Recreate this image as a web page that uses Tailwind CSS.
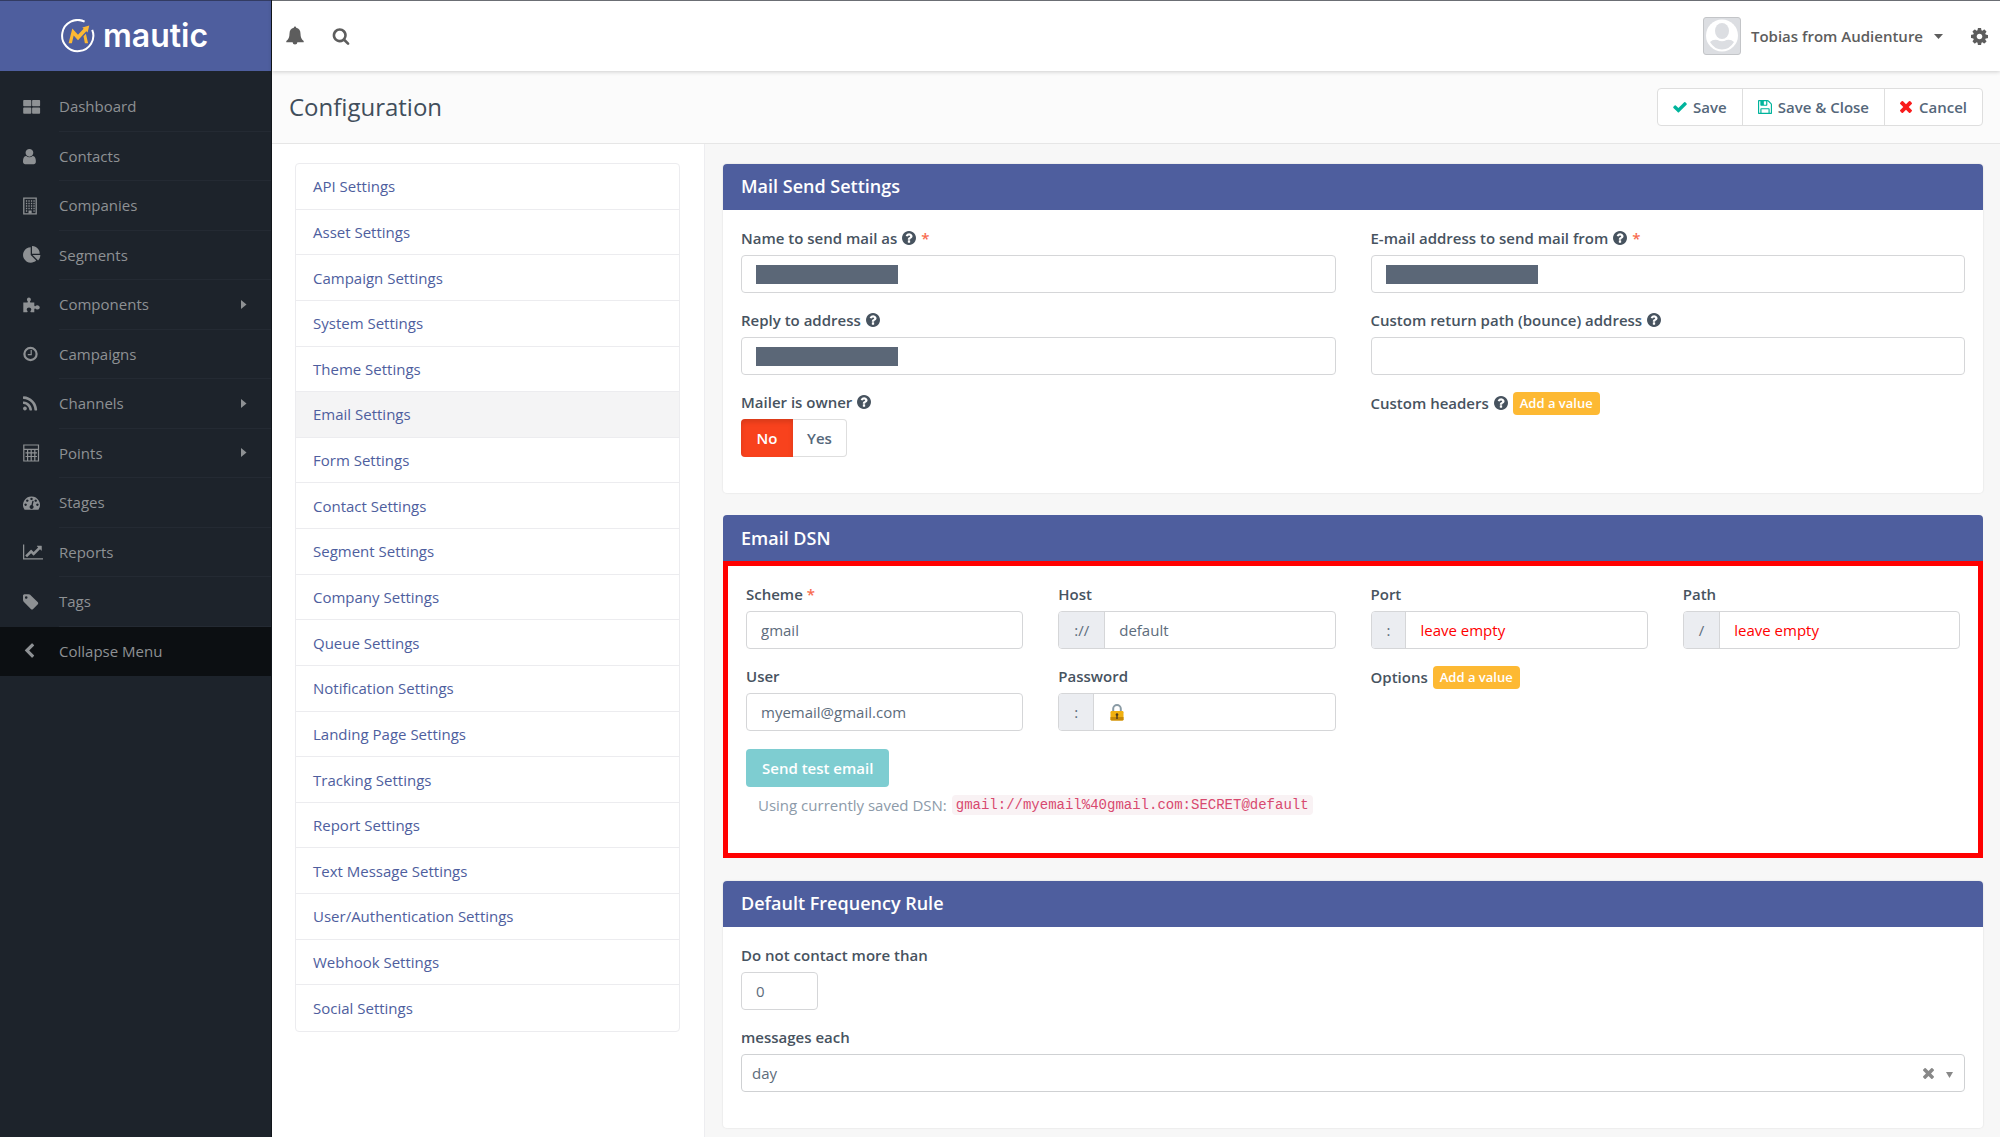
<!DOCTYPE html>
<html lang="en">
<head>
<meta charset="utf-8">
<meta name="viewport" content="width=device-width, initial-scale=1">
<title>Configuration | Mautic</title>
<script src="https://cdn.jsdelivr.net/npm/@tailwindcss/browser@4"></script>
</head>
<body class="flex min-h-screen bg-[#f7f7f7] font-['Open_Sans',sans-serif] text-[15px] leading-6 text-[#5d6c7c]">

<!-- Icon sprite -->
<svg class="hidden" aria-hidden="true">
  <symbol id="i-dashboard" viewBox="0 0 18 18"><path d="M1 2h6.500q.8 0 .8.800v4.600q0 .8-.8.800H1q-.8 0-.8-.8V2.800Q.2 2 1 2zm8.900 0h6.400q.8 0 .8.800v4.600q0 .8-.8.800H9.900q-.8 0-.8-.8V2.800q0-.8.800-.8zM1 9.500h6.500q.8 0 .8.800v4.600q0 .8-.8.800H1q-.8 0-.8-.8v-4.600q0-.8.800-.8zm8.900 0h6.400q.8 0 .8.800v4.600q0 .8-.8.800H9.900q-.8 0-.8-.8v-4.600q0-.8.800-.8z"/></symbol>
  <symbol id="i-user" viewBox="256 -64 1792 1792"><path d="M1536 1399q0 109-62.500 187t-150.500 78h-854q-88 0-150.500-78t-62.500-187q0-85 8.500-160.500t31.500-152 58.500-131 94-89 134.500-34.500q131 128 313 128t313-128q76 0 134.500 34.500t94 89 58.500 131 31.500 152 8.500 160.500zm-256-887q0 159-112.500 271.500t-271.500 112.500-271.500-112.500-112.500-271.500 112.500-271.500 271.500-112.500 271.500 112.500 112.500 271.500z"/></symbol>
  <symbol id="i-building" viewBox="0 0 18 18"><path fill="none" stroke="currentColor" stroke-width="1.300" d="M.8 1.200h12.400v15.600H.8z"/><path fill="none" stroke="currentColor" stroke-width="1.300" stroke-dasharray="1.300 1.200" d="M2.900 4h9M2.900 6.500h9M2.900 9h9M2.900 11.500h9M2.900 14h2.500M10.400 14h1.500"/><path d="M5.500 13.500h3.200v3H5.500z"/></symbol>
  <symbol id="i-pie" viewBox="0 0 1792 1792"><path d="M768 890l546 546q-106 108-247.500 168t-298.500 60q-209 0-385.500-103t-279.500-279.500-103-385.500 103-385.500 279.500-279.500 385.500-103v762zm187 6h773q0 157-60 298.500t-168 247.500zm709-128h-768v-768q209 0 385.500 103t279.500 279.500 103 385.500z"/></symbol>
  <symbol id="i-puzzle" viewBox="0 0 18 18"><path d="M.3 6.500h3.900q.8-.2.600-1-.9-1-.9-2 .1-1.900 2-2 1.900.1 2 2 0 1-.9 2-.2.800.6 1h3.700v3.100q.2.900 1 .6.700-1 2.200-1 2.200.2 2.300 2.200-.1 2-2.300 2.200-1.500 0-2.200-1-.8-.3-1 .6v3.100H8.100q-.9-.2-.7-1.100.9-.9.900-1.900-.2-1.700-2.300-1.800-2.100.1-2.300 1.800 0 1 .9 1.900.2.900-.7 1.100H.3z"/></symbol>
  <symbol id="i-clock" viewBox="0 0 18 18"><circle cx="7.500" cy="9" r="6.100" fill="none" stroke="currentColor" stroke-width="2.200"/><path fill="none" stroke="currentColor" stroke-width="1.200" d="M8.200 5v4.600H4.800"/></symbol>
  <symbol id="i-rss" viewBox="192 0 1792 1792"><path d="M576 1344q0 80-56 136t-136 56-136-56-56-136 56-136 136-56 136 56 56 136zm512 123q2 28-17 48-18 21-47 21h-135q-25 0-43-16.500t-20-41.500q-22-229-184.500-391.500t-391.500-184.500q-25-2-41.500-20t-16.500-43v-135q0-29 21-47 17-17 43-17h5q160 13 306 80.500t259 181.500q114 113 181.500 259t80.500 306zm512 2q2 27-18 47-18 20-46 20h-143q-26 0-44.500-17.500t-19.500-42.500q-12-215-101-408.500t-231.500-336-336-231.500-408.500-102q-25-1-42.500-19.500t-17.500-43.500v-143q0-28 20-46 18-18 44-18h3q262 13 501.500 120t425.500 294q187 186 294 425.500t120 501.500z"/></symbol>
  <symbol id="i-table" viewBox="0 0 18 18"><path fill="none" stroke="currentColor" stroke-width="1.200" d="M.8 1h14.700v16H.8zM.8 5.300h14.700M2.500 8.900h11.500M2.500 12.500h11.500M4.600 5.300V17M8.200 5.300V17M11.800 5.300V17"/></symbol>
  <symbol id="i-gauge" viewBox="0 0 18 18"><path fill-rule="evenodd" d="M8.500 2.500a8.400 8.400 0 0 1 7.200 12.800q-.3.500-.8.500H2.100q-.5 0-.8-.5A8.400 8.400 0 0 1 8.500 2.500zm0 1.200a1.200 1.200 0 1 0 .01 0zM4.300 5.400a1.200 1.200 0 1 0 .01 0zM2.600 9.500a1.200 1.200 0 1 0 .01 0zM12.700 5.400a1.200 1.200 0 1 0 .01 0zM14.400 9.500a1.200 1.200 0 1 0 .01 0zM9.400 6.800l-1 4.200a2 2 0 1 0 1.300.3l1-4.200z"/></symbol>
  <symbol id="i-chart" viewBox="-128 0 2048 1792"><path d="M1920 1536v128h-2048v-1536h128v1408h1920zm-128-1248v435q0 21-19.500 29.500t-35.500-7.500l-121-121-633 633q-10 10-23 10t-23-10l-233-233-416 416-192-192 585-585q10-10 23-10t23 10l233 233 464-464-121-121q-16-16-7.500-35.500t29.500-8.500h435q14 0 23 9t9 23z"/></symbol>
  <symbol id="i-tag" viewBox="128 0 1792 1792"><path d="M576 448q0-53-37.500-90.500t-90.500-37.500-90.500 37.500-37.500 90.500 37.500 90.500 90.500 37.500 90.500-37.500 37.500-90.500zm1067 576q0 53-37 90l-491 492q-39 37-91 37-53 0-90-37l-715-716q-38-37-64.500-101t-26.500-117v-416q0-52 38-90t90-38h416q53 0 117 26.500t102 64.500l715 714q37 39 37 91z"/></symbol>
  <symbol id="i-left" viewBox="200 0 1792 1792"><path d="M1427 301l-531 531 531 531q19 19 19 45t-19 45l-166 166q-19 19-45 19t-45-19l-742-742q-19-19-19-45t19-45l742-742q19-19 45-19t45 19l166 166q19 19 19 45t-19 45z"/></symbol>
  <symbol id="i-search" viewBox="0 0 1792 1792"><path d="M1216 832q0-185-131.500-316.500t-316.500-131.500-316.500 131.500-131.500 316.500 131.500 316.500 316.500 131.500 316.500-131.500 131.500-316.500zm512 832q0 52-38 90t-90 38q-54 0-90-38l-343-342q-179 124-399 124-143 0-273.500-55.500t-225-150-150-225-55.500-273.500 55.500-273.500 150-225 225-150 273.500-55.500 273.500 55.500 225 150 150 225 55.500 273.500q0 220-124 399l343 343q37 37 37 90z"/></symbol>
  <symbol id="i-bell" viewBox="0 0 18 20"><path d="M9 .5q1.200 0 1.200 1.300 4.300 1 4.300 6 0 5.200 3.200 7.200v1.200h-6.300q-.2 2.300-2.400 2.300t-2.400-2.300H.3V15q3.200-2 3.200-7.200 0-5 4.300-6Q7.800.5 9 .5z"/></symbol>
  <symbol id="i-cog" viewBox="128 128 1536 1536"><path d="M1152 896q0-106-75-181t-181-75-181 75-75 181 75 181 181 75 181-75 75-181zm512-109v222q0 12-8 23t-20 13l-185 28q-19 54-39 91 35 50 107 138 10 12 10 25t-9 23q-27 37-99 108t-94 71q-12 0-26-9l-138-108q-44 23-91 38-16 136-29 186-7 28-36 28h-222q-14 0-24.500-8.500t-11.500-21.500l-28-184q-49-16-90-37l-141 107q-10 9-25 9-14 0-25-11-126-114-165-168-7-10-7-23 0-12 8-23 15-21 51-66.500t54-70.500q-27-50-41-99l-183-27q-13-2-21-12.500t-8-23.500v-222q0-12 8-23t19-13l186-28q14-46 39-92-40-57-107-138-10-12-10-24 0-10 9-23 26-36 98.500-107.500t94.500-71.500q13 0 26 10l138 107q44-23 91-38 16-136 29-186 7-28 36-28h222q14 0 24.500 8.500t11.500 21.500l28 184q49 16 90 37l142-107q9-9 24-9 13 0 25 10 129 119 165 170 7 8 7 22 0 12-8 23-15 21-51 66.500t-54 70.500q26 50 41 98l183 28q13 2 21 12.500t8 23.500z"/></symbol>
  <symbol id="i-check" viewBox="100 0 1592 1792"><path d="M1671 566q0 40-28 68l-724 724-136 136q-28 28-68 28t-68-28l-136-136-362-362q-28-28-28-68t28-68l136-136q28-28 68-28t68 28l294 295 656-657q28-28 68-28t68 28l136 136q28 28 28 68z"/></symbol>
  <symbol id="i-save" viewBox="128 128 1536 1536"><path d="M512 1536h768v-384h-768v384zm896 0h128v-896q0-14-10-38.500t-20-34.500l-281-281q-10-10-34-20t-39-10v416q0 40-28 68t-68 28h-576q-40 0-68-28t-28-68v-416h-128v1280h128v-416q0-40 28-68t68-28h832q40 0 68 28t28 68v416zm-384-928v-320q0-13-9.500-22.500t-22.500-9.500h-192q-13 0-22.500 9.500t-9.500 22.500v320q0 13 9.500 22.500t22.500 9.500h192q13 0 22.500-9.500t9.500-22.500zm640 32v928q0 40-28 68t-68 28h-1344q-40 0-68-28t-28-68v-1344q0-40 28-68t68-28h928q40 0 88 20t76 48l280 280q28 28 48 76t20 88z"/></symbol>
  <symbol id="i-times" viewBox="302 366 1188 1188"><path d="M1490 1322q0 40-28 68l-136 136q-28 28-68 28t-68-28l-294-294-294 294q-28 28-68 28t-68-28l-136-136q-28-28-28-68t28-68l294-294-294-294q-28-28-28-68t28-68l136-136q28-28 68-28t68 28l294 294 294-294q28-28 68-28t68 28l136 136q28 28 28 68t-28 68l-294 294 294 294q28 28 28 68z"/></symbol>
  <symbol id="i-help" viewBox="128 128 1536 1536"><path d="M1024 1376v-192q0-14-9-23t-23-9h-192q-14 0-23 9t-9 23v192q0 14 9 23t23 9h192q14 0 23-9t9-23zm256-672q0-88-55.500-163t-138.500-116-170-41q-243 0-371 213-15 24 8 42l132 100q7 6 19 6 16 0 25-12 53-68 86-92 34-24 86-24 48 0 85.500 26t37.500 59q0 38-20 61t-68 45q-63 28-115.500 86.500t-52.500 125.500v36q0 14 9 23t23 9h192q14 0 23-9t9-23q0-19 21.500-49.500t54.500-49.500q32-18 49-28.500t46-35 44.500-48 28-60.500 12.500-81zm384 192q0 209-103 385.500t-279.500 279.500-385.500 103-385.500-103-279.500-279.500-103-385.500 103-385.500 279.500-279.500 385.500-103 385.500 103 279.500 279.500 103 385.500z"/></symbol>
</svg>

<aside class="w-[272px] shrink-0 border-r border-[#12161b] bg-[#1d232b] text-[#8e9194]">
  <a href="#" aria-label="Mautic" class="flex h-[71px] items-center gap-2 border-t border-[#323b62] bg-[#4e5e9e] pl-[61px] text-white">
    <svg class="size-[34px] shrink-0" viewBox="0 0 34 34" fill="none">
      <path d="M23.600 2.600A15.600 15.600 0 1 0 31.200 10.800" stroke="#fff" stroke-width="2"/>
      <path fill="#fdb933" d="M7.600 24.300 11.300 9.400l5.700 6.300 5.600-5.900-1.300-1.200 7-2.200-1.700 7.200-1.300-1.300-8.300 9-4.300-4.800-1.800 7.800zM22.500 17.300l2.400-2.500 2.200 9.500h-3.200z"/>
    </svg>
    <span class="font-['Inter',sans-serif] text-[32px] leading-9 font-semibold">mautic</span>
  </a>
  <nav aria-label="Main" class="pt-[11px]">
    <ul id="menu" class="grid h-[594px] auto-rows-fr"></ul>
  </nav>
</aside>

<div class="flex min-w-0 flex-1 flex-col">
  <header class="z-10 flex h-[71px] items-center border-t border-[#6b6e74] bg-white pr-3 pl-[14px] text-[#5d5d5d] shadow-[0_1px_4px_rgba(0,0,0,0.18)]">
    <button type="button" aria-label="Notifications"><svg class="h-5 w-[18px] fill-current"><use href="#i-bell"/></svg></button>
    <button type="button" aria-label="Search" class="ml-7"><svg class="size-[18px] fill-current"><use href="#i-search"/></svg></button>
    <button type="button" class="ml-auto flex items-center font-semibold">
      <svg class="mr-[10px] size-[38px]" viewBox="0 0 38 38">
        <rect x=".5" y=".5" width="37" height="37" rx="2.500" fill="#dcdee2" stroke="#c3c5c8"/>
        <circle cx="19" cy="18.500" r="16" fill="#fff"/>
        <ellipse cx="19" cy="14" rx="7" ry="8" fill="#dcdee2"/>
        <path fill="#dcdee2" d="M7 25q3-3 7.500-2 4.500 2.500 9 0 4.500-1 7.500 2-4.500 7.500-12 7.500T7 25z"/>
      </svg>
      Tobias from Audienture
      <svg class="ml-[11px] h-[5px] w-[9px] fill-current" viewBox="0 0 9 5"><path d="M0 0h9L4.500 5z"/></svg>
    </button>
    <button type="button" aria-label="Settings" class="ml-7"><svg class="size-[17px] fill-current"><use href="#i-cog"/></svg></button>
  </header>

  <div class="flex h-[73px] items-center justify-between border-b border-[#e6e6e6] bg-[#fbfbfb] pr-[17px] pl-[17px]">
    <h1 class="text-2xl leading-8 text-[#414e5b]">Configuration</h1>
    <div class="flex h-[38px] divide-x divide-[#dedede] rounded border border-[#dedede] bg-white font-semibold text-[#55677a]">
      <button type="button" class="flex items-center gap-[6px] px-[15px]"><svg class="h-4 w-[14px] fill-[#00b49c]"><use href="#i-check"/></svg>Save</button>
      <button type="button" class="flex items-center gap-[6px] px-[15px]"><svg class="size-[14px] fill-[#00b49c]"><use href="#i-save"/></svg>Save &amp; Close</button>
      <button type="button" class="flex items-center gap-[7px] px-[15px]"><svg class="size-[12px] fill-[#f91b1b]"><use href="#i-times"/></svg>Cancel</button>
    </div>
  </div>

  <div class="flex flex-1">
    <nav aria-label="Settings sections" class="w-[433px] shrink-0 border-r border-[#ededf0] bg-white pt-[19px] pr-6 pl-[23px]">
      <ul id="sections" class="grid h-[869px] auto-rows-fr divide-y divide-[#ececef] rounded border border-[#ececef]"></ul>
    </nav>

    <main class="min-w-0 flex-1 pt-5 pr-[17px] pl-[18px]">
      <section class="overflow-hidden rounded bg-white shadow-[0_0_1px_1px_#ededed]">
        <h2 class="bg-[#4e5e9e] px-[18px] pt-[10px] pb-3 text-lg leading-6 font-semibold text-white">Mail Send Settings</h2>
        <div class="grid grid-cols-2 gap-x-[35px] gap-y-[15px] px-[18px] pt-4 pb-9">
          <div class="flex flex-col gap-[5px]">
            <label for="name" class="flex items-center gap-[5px] font-semibold text-[#47535f]">Name to send mail as <svg class="size-[14px] fill-current"><use href="#i-help"/></svg> <span class="text-[#f86b4f]">*</span></label>
            <div class="relative"><input id="name" class="block h-[38px] w-full rounded border border-[#d5d6d8] bg-white px-[14px]"><span class="pointer-events-none absolute top-[10px] left-[15px] h-[19px] w-[142px] bg-[#5b6777]"></span></div>
          </div>
          <div class="flex flex-col gap-[5px]">
            <label for="from" class="flex items-center gap-[5px] font-semibold text-[#47535f]">E-mail address to send mail from <svg class="size-[14px] fill-current"><use href="#i-help"/></svg> <span class="text-[#f86b4f]">*</span></label>
            <div class="relative"><input id="from" class="block h-[38px] w-full rounded border border-[#d5d6d8] bg-white px-[14px]"><span class="pointer-events-none absolute top-[10px] left-[15px] h-[19px] w-[152px] bg-[#5b6777]"></span></div>
          </div>
          <div class="flex flex-col gap-[5px]">
            <label for="reply" class="flex items-center gap-[5px] font-semibold text-[#47535f]">Reply to address <svg class="size-[14px] fill-current"><use href="#i-help"/></svg></label>
            <div class="relative"><input id="reply" class="block h-[38px] w-full rounded border border-[#d5d6d8] bg-white px-[14px]"><span class="pointer-events-none absolute top-[10px] left-[15px] h-[19px] w-[142px] bg-[#5b6777]"></span></div>
          </div>
          <div class="flex flex-col gap-[5px]">
            <label for="bounce" class="flex items-center gap-[5px] font-semibold text-[#47535f]">Custom return path (bounce) address <svg class="size-[14px] fill-current"><use href="#i-help"/></svg></label>
            <input id="bounce" class="block h-[38px] w-full rounded border border-[#d5d6d8] bg-white px-[14px]">
          </div>
          <div class="flex flex-col items-start gap-[5px]">
            <span id="owner" class="flex items-center gap-[5px] font-semibold text-[#47535f]">Mailer is owner <svg class="size-[14px] fill-current"><use href="#i-help"/></svg></span>
            <div role="group" aria-labelledby="owner" class="flex h-[38px] font-semibold">
              <button type="button" aria-pressed="true" class="w-[52px] rounded-l bg-[#f8421d] text-white shadow-[inset_0_3px_5px_rgba(0,0,0,0.13)]">No</button>
              <button type="button" aria-pressed="false" class="w-[54px] rounded-r border border-l-0 border-[#dedede] text-[#55677a]">Yes</button>
            </div>
          </div>
          <div class="flex h-[26px] items-center gap-[5px] font-semibold text-[#47535f]">
            Custom headers <svg class="size-[14px] fill-current"><use href="#i-help"/></svg>
            <button type="button" class="h-[23px] rounded-sm bg-[#fdb933] px-[7px] text-[13px] leading-5 font-semibold text-white">Add a value</button>
          </div>
        </div>
      </section>

      <section class="mt-[22px]">
        <h2 class="rounded-t bg-[#4e5e9e] px-[18px] py-[11px] text-lg leading-6 font-semibold text-white">Email DSN</h2>
        <div class="border-5 border-[#ff0000] bg-white px-[18px] pt-4 pb-9">
          <div class="grid grid-cols-4 gap-x-[35px] gap-y-[15px]">
            <div class="flex flex-col gap-[5px]">
              <label for="scheme" class="font-semibold text-[#47535f]">Scheme <span class="text-[#f86b4f]">*</span></label>
              <input id="scheme" value="gmail" class="block h-[38px] w-full rounded border border-[#d5d6d8] bg-white px-[14px]">
            </div>
            <div class="flex flex-col gap-[5px]">
              <label for="host" class="font-semibold text-[#47535f]">Host</label>
              <div class="flex h-[38px] overflow-hidden rounded border border-[#d5d6d8]">
                <span class="flex items-center border-r border-[#d5d6d8] bg-[#ebedf1] px-[15px]">://</span>
                <input id="host" value="default" class="w-full min-w-0 flex-1 px-[14px]">
              </div>
            </div>
            <div class="flex flex-col gap-[5px]">
              <label for="port" class="font-semibold text-[#47535f]">Port</label>
              <div class="flex h-[38px] overflow-hidden rounded border border-[#d5d6d8]">
                <span class="flex items-center border-r border-[#d5d6d8] bg-[#ebedf1] px-[15px]">:</span>
                <input id="port" value="leave empty" class="w-full min-w-0 flex-1 px-[14px] text-[#ff0000]">
              </div>
            </div>
            <div class="flex flex-col gap-[5px]">
              <label for="path" class="font-semibold text-[#47535f]">Path</label>
              <div class="flex h-[38px] overflow-hidden rounded border border-[#d5d6d8]">
                <span class="flex items-center border-r border-[#d5d6d8] bg-[#ebedf1] px-[15px]">/</span>
                <input id="path" value="leave empty" class="w-full min-w-0 flex-1 px-[14px] text-[#ff0000]">
              </div>
            </div>
            <div class="flex flex-col gap-[5px]">
              <label for="user" class="font-semibold text-[#47535f]">User</label>
              <input id="user" value="myemail@gmail.com" class="block h-[38px] w-full rounded border border-[#d5d6d8] bg-white px-[14px]">
            </div>
            <div class="flex flex-col gap-[5px]">
              <label for="password" class="font-semibold text-[#47535f]">Password</label>
              <div class="flex h-[38px] items-center overflow-hidden rounded border border-[#d5d6d8]">
                <span class="flex h-full items-center border-r border-[#d5d6d8] bg-[#ebedf1] px-[15px]">:</span>
                <svg class="ml-4 h-[17px] w-[14px] shrink-0" viewBox="0 0 14 17">
                  <path fill="none" stroke="#8a9ba5" stroke-width="2" d="M3.200 8V4.800a3.800 3.800 0 0 1 7.600 0V8"/>
                  <rect x=".5" y="7" width="13" height="9.500" rx="1.200" fill="#f0b010"/>
                  <path fill="#c78a09" d="M.5 13h13v2.300q0 1.200-1.200 1.200H1.700Q.5 16.500.5 15.300z"/>
                  <path fill="#4a3a20" d="M7 9.200a1.400 1.400 0 0 1 .7 2.600V15H6.300v-3.200A1.400 1.400 0 0 1 7 9.200z"/>
                </svg>
                <input id="password" type="password" class="w-full min-w-0 flex-1 px-1">
              </div>
            </div>
            <div class="flex h-[26px] items-center gap-[5px] font-semibold text-[#47535f]">
              Options
              <button type="button" class="h-[23px] rounded-sm bg-[#fdb933] px-[7px] text-[13px] leading-5 font-semibold text-white">Add a value</button>
            </div>
          </div>
          <button type="button" class="mt-[18px] block h-[38px] rounded bg-[#7ecdd1] px-4 font-semibold text-white">Send test email</button>
          <p class="mt-[6px] flex items-center gap-[5px] pl-3 text-[#8c9aa9]">Using currently saved DSN: <code class="rounded bg-[#f9f2f4] px-1 font-['Liberation_Mono',monospace] text-sm leading-5 text-[#d8496f]">gmail://myemail%40gmail.com:SECRET@default</code></p>
        </div>
      </section>

      <section class="mt-[23px] overflow-hidden rounded bg-white shadow-[0_0_1px_1px_#ededed]">
        <h2 class="bg-[#4e5e9e] px-[18px] pt-[10px] pb-3 text-lg leading-6 font-semibold text-white">Default Frequency Rule</h2>
        <div class="flex flex-col gap-[15px] px-[18px] pt-4 pb-9">
          <div class="flex flex-col gap-[5px]">
            <label for="limit" class="font-semibold text-[#47535f]">Do not contact more than</label>
            <input id="limit" value="0" class="block h-[38px] w-[77px] rounded border border-[#d5d6d8] bg-white px-[14px]">
          </div>
          <div class="flex flex-col gap-[5px]">
            <label for="period" class="font-semibold text-[#47535f]">messages each</label>
            <div class="relative">
              <select id="period" class="block h-[38px] w-full appearance-none rounded border border-[#cfd1d3] bg-white px-[10px]"><option>day</option></select>
              <button type="button" aria-label="Clear" class="absolute top-[14px] right-[31px]"><svg class="block size-[11px] fill-[#888]"><use href="#i-times"/></svg></button>
              <svg class="pointer-events-none absolute top-[18px] right-[12px] h-[6px] w-[7px] fill-[#888]" viewBox="0 0 7 6"><path d="M0 0h7L3.500 6z"/></svg>
            </div>
          </div>
        </div>
      </section>
    </main>
  </div>
</div>

<script>
  const menu = [
    ["Dashboard", "i-dashboard"], ["Contacts", "i-user"], ["Companies", "i-building"], ["Segments", "i-pie"],
    ["Components", "i-puzzle", true], ["Campaigns", "i-clock"], ["Channels", "i-rss", true], ["Points", "i-table", true],
    ["Stages", "i-gauge"], ["Reports", "i-chart"], ["Tags", "i-tag"]
  ];
  const arrow = `<svg class="mr-6 h-[9px] w-[6px] fill-current" viewBox="0 0 6 9"><path d="M0 0v9l5.500-4.500z"/></svg>`;
  document.getElementById("menu").innerHTML = menu.map(([name, icon, sub]) => `
    <li><a href="#" class="flex h-full items-center pl-[23px]">
      <span class="w-9 shrink-0"><svg class="${icon === "i-chart" ? "h-[18px] w-[20px]" : "size-[18px]"} fill-current"><use href="#${icon}"/></svg></span>
      <span class="flex h-full flex-1 items-center justify-between border-b border-[#242a33]">${name}${sub ? arrow : ""}</span>
    </a></li>`).join("") + `
    <li class="bg-[#0c0f12]"><button type="button" class="flex h-full w-full items-center pl-[23px]">
      <span class="w-9 shrink-0"><svg class="size-4 fill-current"><use href="#i-left"/></svg></span>Collapse Menu
    </button></li>`;

  const sections = ["API", "Asset", "Campaign", "System", "Theme", "Email", "Form", "Contact", "Segment", "Company", "Queue",
    "Notification", "Landing Page", "Tracking", "Report", "Text Message", "User/Authentication", "Webhook", "Social"];
  document.getElementById("sections").innerHTML = sections.map(name => `
    <li class="${name === "Email" ? "bg-[#f4f4f5]" : "bg-transparent"}"><a href="#" class="flex h-full items-center px-[17px] text-[#4e5e9e]">${name} Settings</a></li>`).join("");
</script>
</body>
</html>
